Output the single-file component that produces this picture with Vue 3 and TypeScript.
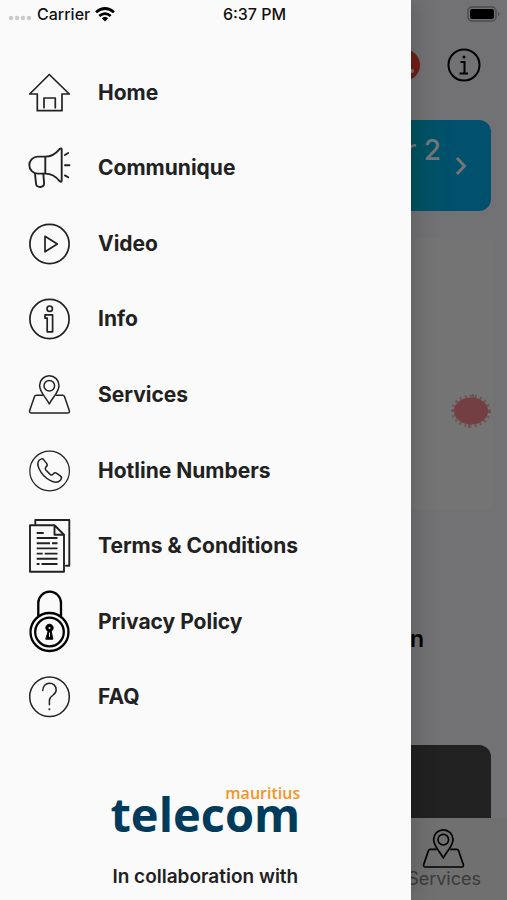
<script setup lang="ts">
interface MenuItem {
  id: string
  label: string
}

const items: MenuItem[] = [
  { id: 'home', label: 'Home' },
  { id: 'communique', label: 'Communique' },
  { id: 'video', label: 'Video' },
  { id: 'info', label: 'Info' },
  { id: 'services', label: 'Services' },
  { id: 'hotline', label: 'Hotline Numbers' },
  { id: 'terms', label: 'Terms & Conditions' },
  { id: 'privacy', label: 'Privacy Policy' },
  { id: 'faq', label: 'FAQ' },
]
</script>

<template>
  <div class="screen">
    <main class="page">
      <header class="toolbar">
        <button class="round-button" type="button" aria-label="Alerts">
          <svg viewBox="0 0 32 32" width="32" height="32" aria-hidden="true">
            <circle cx="16" cy="16" r="16" fill="#f4442e" />
            <circle cx="24" cy="22" r="2" fill="#fff" />
          </svg>
        </button>
        <button class="round-button" type="button" aria-label="Information">
          <svg viewBox="0 0 34 34" width="34" height="34" fill="none" stroke="#000" stroke-width="2" aria-hidden="true">
            <circle cx="17" cy="17" r="15.5" />
            <path d="M13.500 14H17.500V25M12.500 25.500H21" />
            <circle cx="17" cy="9" r="1.500" fill="#000" stroke="none" />
          </svg>
        </button>
      </header>
      <a class="banner" href="#">
        <span class="banner-text">r 2</span>
        <svg viewBox="0 0 12 20" width="12" height="20" fill="none" stroke="#fff" stroke-width="3" aria-hidden="true">
          <path d="M2 2 9.500 10 2 18" />
        </svg>
      </a>
      <section class="picture">
        <svg viewBox="0 0 44 40" width="44" height="40" aria-hidden="true">
          <ellipse cx="22" cy="20" rx="18" ry="14.500" fill="none" stroke="#f08d92" stroke-opacity="0.600" stroke-width="4" stroke-dasharray="2 3" />
          <path d="M20 33v4M24 7V3M3 19h4M37 21h4" stroke="#f08d92" stroke-opacity="0.600" stroke-width="2" />
          <ellipse cx="22" cy="20" rx="17" ry="13.500" fill="#fa8a90" />
        </svg>
      </section>
      <h2 class="heading">n</h2>
      <section class="dark-card"></section>
      <nav class="tabs">
        <a class="tab" href="#">
          <svg viewBox="0 10 44 42" width="44" height="42" fill="none" stroke="#000" stroke-width="1.700" stroke-linejoin="round" aria-hidden="true">
            <path d="M21.300 41C18.500 35 11.600 29.500 11.600 22.500a9.700 9.700 0 0 1 19.400 0C31 29.500 24 35 21.300 41Z" />
            <circle cx="21.300" cy="22.700" r="5.300" />
            <path d="M14.500 32.300H8.200Q7 32.300 6.500 33.500L1.700 47.500Q1 50 3.500 50H39.500Q42 50 41.300 47.500L36.500 33.500Q36 32.300 34.800 32.300H28.200" />
          </svg>
          <span>Services</span>
        </a>
      </nav>
    </main>

    <div class="backdrop"></div>

    <aside class="drawer">
      <nav class="menu">
        <a v-for="item in items" :key="item.id" class="menu-item" href="#">
          <svg class="icon" viewBox="0 0 44 64" width="44" height="64" aria-hidden="true">
            <g v-if="item.id === 'home'">
              <path d="M21.300 13.500 1.700 33H9.300V49.700H34V33H41.300Z" />
              <path d="M16 46.700V37H27.300V46.700" />
            </g>
            <g v-else-if="item.id === 'communique'" stroke-width="1.900">
              <path d="M17.300 20.600H9.800a8.500 8.500 0 0 0 0 17H17.300ZM17.300 20.600C23.500 20.600 28 17.500 31.800 12.800Q33.700 11.500 33.700 13.800V44.300Q33.700 46.600 31.800 45.300C28 40.500 23.500 37.600 17.300 37.600" />
              <path d="M7 37.600 8 47.500C8.500 52.300 16.400 52 16.100 47.300L15.300 37.600M36.900 19 40.200 17M37 29.200H41.500M36.900 39.400 40.200 41.300" />
            </g>
            <g v-else-if="item.id === 'video'">
              <circle cx="21.500" cy="32" r="19.600" />
              <path d="M17 24.300 29.300 32 17 39.800Z" />
            </g>
            <g v-else-if="item.id === 'info'">
              <circle cx="21.500" cy="32" r="19.600" />
              <circle cx="21.700" cy="21.700" r="2.700" />
              <path d="M17 27.800H24.600V44.800H19.200V31.200H17Z" />
            </g>
            <g v-else-if="item.id === 'services'" stroke-width="1.500">
              <path d="M21.300 41C18.500 35 11.600 29.500 11.600 22.500a9.700 9.700 0 0 1 19.400 0C31 29.500 24 35 21.300 41Z" />
              <circle cx="21.300" cy="22.700" r="5.300" />
              <path d="M14.500 32.300H8.200Q7 32.300 6.500 33.500L1.700 47.500Q1 50 3.500 50H39.500Q42 50 41.300 47.500L36.500 33.500Q36 32.300 34.800 32.300H28.200" />
            </g>
            <g v-else-if="item.id === 'hotline'" stroke-width="1.200">
              <circle cx="21.600" cy="32" r="19.800" />
              <path stroke-width="1.500" d="M11.200 21.300Q14 18.800 15.600 20.600L18.800 24.600Q20 26.400 17.800 28.200Q16.600 29.400 17.800 31L22.400 35.600Q23.800 36.700 25.200 35Q27 33 28.800 34.400L32.600 37.200Q34.400 38.700 32.600 40.900Q29 45 22.500 41.700Q14.500 37.500 11 29.500Q8.600 24 11.200 21.300Z" />
            </g>
            <g v-else-if="item.id === 'terms'" stroke-width="1.900">
              <path d="M2 11.300H26.500L36 20.700V57.700H2ZM26.500 11.300V20.700H36M7.300 9.500V6H41.300V51.700H38" />
              <path stroke-linecap="butt" d="M8.700 19H15.700M8.700 24H29.500M8.700 29.300H22M24 29.300H29.500M8.700 34.400H29.500M8.700 39.600H14.700M16.700 39.600H29.500M8.700 44.800H29.500M8.700 50H11.500M13.500 50H29.500" />
            </g>
            <g v-else-if="item.id === 'privacy'" stroke="#000" stroke-width="2.300">
              <path d="M10.300 26V13a11.300 11.300 0 0 1 22.700 0V26" />
              <circle cx="21.500" cy="42" r="19" />
              <circle cx="21.500" cy="42" r="14.300" />
              <path fill="#000" stroke-width="1" d="M19.800 41.200A3.700 3.700 0 1 1 23.200 41.200L24.900 49.200H18.100Z" />
              <circle cx="21.500" cy="37.900" r="1" fill="#fafafa" stroke="none" />
              <path d="M21.500 43V46.500" stroke="#fafafa" stroke-width="1" />
            </g>
            <g v-else stroke-width="1.500">
              <circle cx="21.500" cy="31.800" r="19.800" />
              <path d="M14.800 25.500C14.800 15.800 28.200 15.800 28.200 25C28.200 30.500 21.400 30 21.400 35.500V39.800" />
              <circle cx="21.400" cy="44.300" r="1" fill="#222" stroke="none" />
            </g>
          </svg>
          <span>{{ item.label }}</span>
        </a>
      </nav>
      <footer class="partner">
        <div class="logo">
          <span class="logo-top">mauritius</span>
          <span class="logo-main">telecom</span>
        </div>
        <p class="caption">In collaboration with</p>
      </footer>
    </aside>

    <div class="status">
      <div class="carrier">
        <svg viewBox="0 0 24 6" width="24" height="6" fill="#c9c9c9" aria-hidden="true">
          <circle cx="3" cy="3" r="2.200" /><circle cx="9" cy="3" r="2.200" />
          <circle cx="15" cy="3" r="2.200" /><circle cx="21" cy="3" r="2.200" />
        </svg>
        <span>Carrier</span>
        <svg viewBox="0 0 20 15" width="20" height="15" fill="none" stroke="#000" stroke-width="2.800" aria-hidden="true">
          <path d="M1 5.300Q10-2.300 19 5.300M4.300 9Q10 4.300 15.700 9" />
          <path d="M6.800 11.300Q10 8.300 13.200 11.300L10 14.500Z" fill="#000" stroke="none" />
        </svg>
      </div>
      <time>6:37 PM</time>
      <svg class="battery" viewBox="0 0 34 16" width="34" height="16" aria-hidden="true">
        <rect x="1" y="1" width="28" height="14" rx="4" fill="none" stroke="#4c4c4e" stroke-width="1.500" />
        <rect x="3" y="3" width="24" height="10" rx="2" fill="#000" />
        <path d="M31 5.500Q34 8 31 10.500Z" fill="#4c4c4e" />
      </svg>
    </div>
  </div>
</template>

<style>
body {
  margin: 0;
}
</style>

<style scoped>
.screen {
  position: relative;
  min-height: 100vh;
  overflow: hidden;
  font-family: Inter, "Liberation Sans", sans-serif;
  color: #212121;
  background: #f9f9fe;
}

a {
  color: inherit;
  text-decoration: none;
}

svg {
  display: block;
  flex: none;
}

.page {
  display: flex;
  flex-direction: column;
  min-height: 100vh;
  box-sizing: border-box;
  padding-top: 32px;
}

.toolbar {
  display: flex;
  justify-content: flex-end;
  align-items: center;
  gap: 27px;
  height: 66px;
  padding: 0 26px;
}

.round-button {
  padding: 0;
  border: 0;
  background: none;
}

.banner {
  display: flex;
  justify-content: flex-end;
  gap: 14px;
  height: 91px;
  margin: 22px 16px 0;
  padding: 12px 24px 12px 16px;
  box-sizing: border-box;
  border-radius: 12px;
  background: linear-gradient(90deg, #0cc, #00b9cd 80%, #00aeef 92%);
  color: #fff;
}

.banner svg {
  margin-top: 24px;
}

.banner-text {
  font-size: 28px;
  line-height: 36px;
  font-weight: 500;
}

.picture {
  display: flex;
  justify-content: flex-end;
  align-items: center;
  height: 270px;
  margin: 28px 14px 0 16px;
  padding-top: 74px;
  box-sizing: border-box;
  background: #fbfcfb;
}

.heading {
  margin: 116px 83px 0 16px;
  text-align: right;
  font-size: 23px;
  line-height: 28px;
  font-weight: 600;
  color: #000;
}

.dark-card {
  flex: 1;
  min-height: 73px;
  margin: 92px 16px 0;
  border-radius: 12px 12px 0 0;
  background: #484848;
}

.tabs {
  display: flex;
  justify-content: flex-end;
  height: 82px;
  padding: 0 26px;
  background: #f4f4f4;
}

.tab {
  display: flex;
  flex-direction: column;
  align-items: center;
  padding-top: 9px;
  font-size: 18px;
  line-height: 20px;
  color: #808080;
}

.backdrop {
  position: absolute;
  inset: 0;
  background: rgba(0, 0, 0, 0.54);
}

.drawer {
  position: absolute;
  top: 0;
  bottom: 0;
  left: 0;
  width: 81%;
  box-sizing: border-box;
  padding-top: 55px;
  background: #fafafa;
  box-shadow: 0 0 24px rgba(0, 0, 0, 0.24);
}

.menu {
  display: grid;
  grid-template-rows: repeat(9, 1fr);
  height: 680px;
}

.menu-item {
  display: flex;
  align-items: center;
  gap: 26px;
  padding-left: 28px;
  font-size: 21px;
  line-height: 28px;
  font-weight: 700;
}

.icon {
  fill: none;
  stroke: #222;
  stroke-width: 1.7px;
  stroke-linejoin: round;
  stroke-linecap: round;
}

.partner {
  display: flex;
  flex-direction: column;
  align-items: center;
  padding-top: 50px;
}

.logo {
  display: flex;
  flex-direction: column;
  font-family: "Open Sans", Lato, sans-serif;
}

.logo-top {
  align-self: flex-end;
  font-size: 16px;
  line-height: 16px;
  font-weight: 600;
  color: #f7941e;
}

.logo-main {
  font-size: 47px;
  line-height: 26px;
  font-weight: 700;
  color: #003b5c;
}

.caption {
  margin: 39px 0 0;
  font-size: 19px;
  line-height: 22px;
  font-weight: 600;
}

.status {
  position: absolute;
  top: 0;
  left: 0;
  right: 0;
  display: grid;
  grid-template-columns: 1fr auto 1fr;
  align-items: center;
  height: 28px;
  padding: 0 6px 0 8px;
  font-size: 16px;
  line-height: 20px;
  font-weight: 500;
  color: #111;
}

.carrier {
  display: flex;
  align-items: center;
  gap: 5px;
}

.carrier svg:first-child {
  margin-top: 8px;
}

.battery {
  justify-self: end;
}
</style>
